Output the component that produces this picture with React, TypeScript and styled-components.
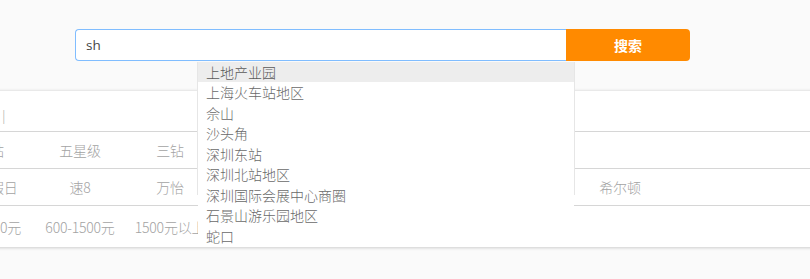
import React from "react";
import styled, { createGlobalStyle } from "styled-components";

const GlobalStyle = createGlobalStyle`
  html, body {
    margin: 0;
    padding: 0;
    background: #fafafa;
    font-family: "Open Sans", "Noto Sans CJK SC", sans-serif;
    overflow: hidden;
  }
`;

const Page = styled.div`
  padding-top: 29px;
  width: 810px;
  overflow: hidden;
  height: 279px;
  box-sizing: border-box;
`;

const SearchBar = styled.div`
  position: relative;
  display: flex;
  margin-left: 75px;
  width: 615px;
  height: 32px;
  z-index: 3;
`;

const SearchInput = styled.div`
  box-sizing: border-box;
  width: 491px;
  height: 32px;
  border: 1px solid #80bdff;
  border-right: none;
  border-radius: 4px 0 0 4px;
  background: #fff;
  padding: 0 10px;
  display: flex;
  align-items: center;
  font-size: 13.5px;
  color: #444;
`;

const SearchButton = styled.button`
  width: 124px;
  height: 32px;
  border: none;
  border-radius: 0 4px 4px 0;
  background: #ff8a00;
  color: #fff;
  font-family: "Noto Sans CJK SC", sans-serif;
  font-size: 14px;
  font-weight: 700;
  padding: 0;
  cursor: pointer;
`;

const Dropdown = styled.ul`
  position: absolute;
  top: 33px;
  left: 123px;
  width: 376px;
  margin: 0;
  padding: 0;
  list-style: none;
  background: #fff;

  &::before {
    content: "";
    position: absolute;
    top: 0;
    left: -1px;
    right: -1px;
    height: 133px;
    border-left: 1px solid #e6e6e6;
    border-right: 1px solid #e6e6e6;
    pointer-events: none;
  }
`;

const Item = styled.li<{ $active?: boolean }>`
  height: 20.45px;
  line-height: 20.45px;
  padding: 0 8px;
  font-family: "Noto Sans CJK SC", sans-serif;
  font-size: 14px;
  font-weight: 300;
  color: ${(p) => (p.$active ? "#5a5a5a" : "#6a6a6a")};
  background: ${(p) => (p.$active ? "#ededed" : "transparent")};
  white-space: nowrap;
`;

const Card = styled.div`
  margin-top: 29px;
  margin-left: -55px;
  width: 900px;
  background: #fff;
  border-top: 1px solid #e9e9e9;
  box-shadow: 0 1px 3px rgba(0, 0, 0, 0.18);
  position: relative;
  z-index: 1;
`;

const Row = styled.div<{ $h: number; $last?: boolean }>`
  display: flex;
  height: ${(p) => p.$h}px;
  align-items: center;
  border-bottom: ${(p) => (p.$last ? "none" : "1px solid #d6d6d6")};
`;

const Heading = styled.span`
  margin-left: 55px;
  margin-top: 8px;
  font-size: 14px;
  font-weight: 300;
  color: #aaa;
`;

const Cell = styled.span`
  flex: none;
  width: 90px;
  text-align: center;
  font-family: "Noto Sans CJK SC", sans-serif;
  font-size: 14px;
  font-weight: 300;
  color: #a3a3a3;
  white-space: nowrap;
  letter-spacing: -0.2px;
`;

const suggestions = [
  "上地产业园",
  "上海火车站地区",
  "佘山",
  "沙头角",
  "深圳东站",
  "深圳北站地区",
  "深圳国际会展中心商圈",
  "石景山游乐园地区",
  "蛇口",
];

const stars = ["四钻", "五星级", "三钻"];
const brands = ["智选假日", "速8", "万怡", "", "", "", "", "希尔顿"];
const prices = ["300-600元", "600-1500元", "1500元以上"];

export default function App() {
  return (
    <>
      <GlobalStyle />
      <Page>
        <SearchBar>
          <SearchInput>sh</SearchInput>
          <SearchButton>搜索</SearchButton>
          <Dropdown>
            {suggestions.map((s, i) => (
              <Item key={s} $active={i === 0}>
                {s}
              </Item>
            ))}
          </Dropdown>
        </SearchBar>
        <Card>
          <Row $h={40}>
            <Heading>|</Heading>
          </Row>
          <Row $h={36}>
            {stars.map((s) => (
              <Cell key={s}>{s}</Cell>
            ))}
          </Row>
          <Row $h={36}>
            {brands.map((s, i) => (
              <Cell key={i}>{s}</Cell>
            ))}
          </Row>
          <Row $h={41} $last>
            {prices.map((s) => (
              <Cell key={s}>{s}</Cell>
            ))}
          </Row>
        </Card>
      </Page>
    </>
  );
}
